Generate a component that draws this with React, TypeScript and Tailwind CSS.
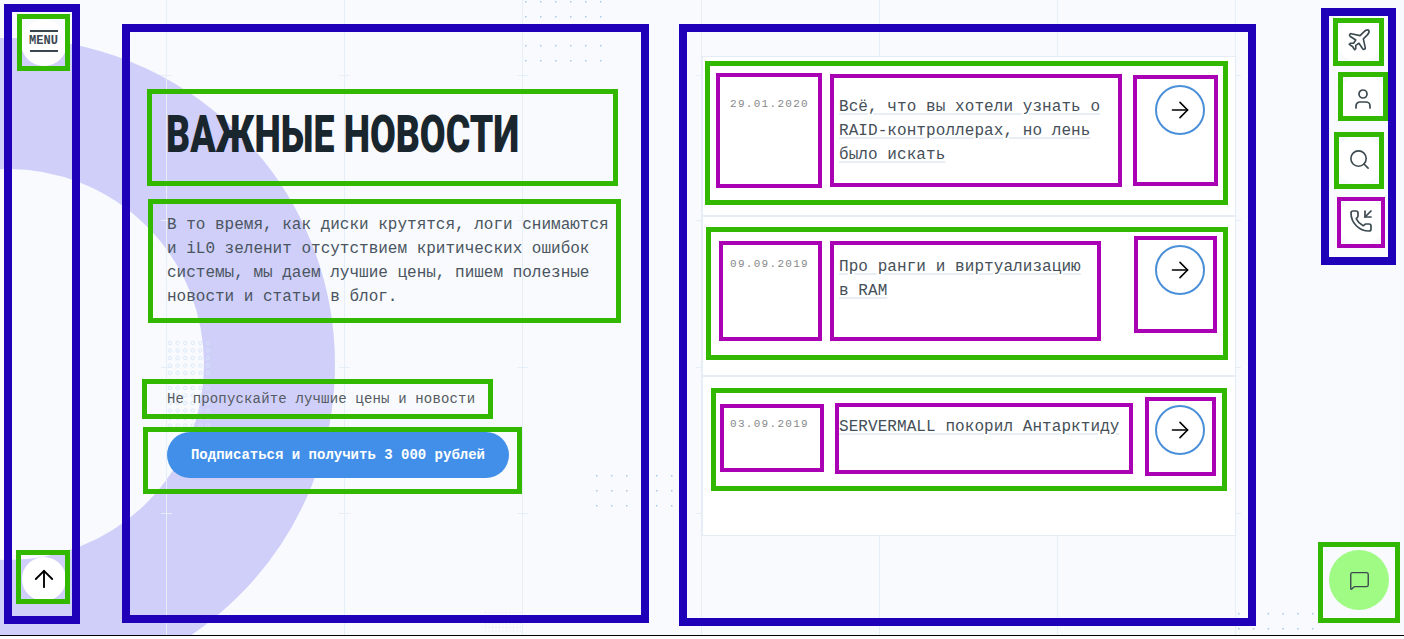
import { ArrowRight, ArrowUp, MessageSquare, PhoneIncoming, Plane, Search, User } from "lucide-react";

const mono = "font-['Liberation_Mono',monospace]";

function Decor() {
  const xs = [166, 344, 522, 701, 879, 1057, 1235];
  const ys = [75, 220, 367, 513];
  const dots: [number, number][] = [];
  for (const y of [1, 16, 45, 60]) for (let i = 0; i < 6; i++) dots.push([525 + i * 15, y]);
  for (const y of [475, 490, 505]) for (let i = 0; i < 6; i++) dots.push([596 + i * 15, y]);
  for (const y of [613, 628]) for (let i = 0; i < 6; i++) dots.push([1238 + i * 14.8, y]);
  const rings: [number, number][] = [];
  for (let r = 0; r < 12; r++) for (let c = 0; c < 6; c++) rings.push([170 + c * 7.6, 343 + r * 7.5]);
  const fine: [number, number][] = [];
  for (let r = 0; r < 6; r++) for (let c = 0; c < 11; c++) fine.push([485 + c * 3.5, 612 + r * 3.7]);
  return (
    <svg className="absolute left-0 top-0" width="1404" height="635" fill="none">
      {xs.map((x) => (
        <line key={x} x1={x + 0.5} x2={x + 0.5} y1="0" y2="635" stroke="#e6eef8" />
      ))}
      {xs.map((x) =>
        ys.map((y) => (
          <path key={`${x}-${y}`} d={`M${x - 5} ${y + 0.5}H${x + 6}`} stroke="#e6eef8" />
        )),
      )}
      {dots.map(([x, y]) => (
        <rect key={`${x}:${y}`} x={x} y={y} width="1.5" height="1.5" fill="#a9c8e8" />
      ))}
      {rings.map(([x, y]) => (
        <circle key={`${x}:${y}`} cx={x} cy={y} r="1.7" stroke="#d6e4f6" strokeWidth="0.8" />
      ))}
      {fine.map(([x, y]) => (
        <rect key={`${x}:${y}`} x={x} y={y} width="1" height="1" fill="#dfe6f2" />
      ))}
    </svg>
  );
}

function Circle({ children, className }: { children: React.ReactNode; className: string }) {
  return <div className={`flex shrink-0 items-center justify-center rounded-full ${className}`}>{children}</div>;
}

type RowProps = {
  date: string;
  title: React.ReactNode;
  rowClass: string;
  greenClass: string;
  dateClass: string;
  titleClass: string;
  arrowClass: string;
};

function Row({ date, title, rowClass, greenClass, dateClass, titleClass, arrowClass }: RowProps) {
  return (
    <div className={rowClass}>
      <div className={`flex items-start border-[5px] border-[#33b800] ${greenClass}`}>
        <div className={`shrink-0 border-4 border-[#a900b4] text-[11px] leading-4 tracking-[1.3px] text-[#85888c] ${mono} ${dateClass}`}>
          {date}
        </div>
        <div className={`shrink-0 border-4 border-[#a900b4] text-base leading-6 tracking-[0.07px] text-[#454f58] ${mono} ${titleClass}`}>
          <span className="underline decoration-[#e8eef6] decoration-2 underline-offset-2">{title}</span>
        </div>
        <div className={`shrink-0 border-4 border-[#a900b4] ${arrowClass}`}>
          <Circle className="h-[50px] w-[50px] border-2 border-[#4a90d9] bg-white">
            <ArrowRight size={26} strokeWidth={1.5} className="text-black" />
          </Circle>
        </div>
      </div>
    </div>
  );
}

export default function App() {
  return (
    <div className="relative h-[639px] w-full overflow-hidden bg-white">
      <div className="relative h-[636px] overflow-hidden border-b border-black bg-[#f8fafe]">
        <div className="absolute left-[-318px] top-[38px] h-[653px] w-[653px] rounded-full border-[131px] border-[#cfcffa]" />
        <Decor />
        <div className="relative flex items-start">
          {/* left rail */}
          <div className="ml-1 mt-1 flex h-[620px] w-[76px] shrink-0 flex-col border-8 border-[#1f00b8]">
            <div className="ml-[5px] mt-[2px] flex h-[57px] w-[53px] items-center justify-center overflow-hidden border-[5px] border-[#33b800]">
              <Circle className="h-[46px] w-[46px] flex-col bg-white pb-1">
                <div className="h-[2px] w-[28px] bg-[#3a474f]" />
                <div className={`my-[2px] text-xs font-bold leading-[14px] text-[#3a474f] ${mono}`}>MENU</div>
                <div className="h-[2px] w-[28px] bg-[#3a474f]" />
              </Circle>
            </div>
            <div className="ml-1 mt-[479px] flex h-[54px] w-[54px] items-center justify-center overflow-hidden border-[5px] border-[#33b800] pl-[2px] pt-1">
              <Circle className="h-[44px] w-[44px] bg-white">
                <ArrowUp size={28} strokeWidth={1.6} className="text-black" />
              </Circle>
            </div>
          </div>

          {/* intro panel */}
          <div className="ml-[42px] mt-6 h-[599px] w-[527px] shrink-0 border-8 border-[#1f00b8]">
            <div className="ml-[17px] mt-[57px] flex h-[97px] w-[471px] items-center border-[5px] border-[#33b800] pb-[7px] pl-[14px]">
              <h1 className="origin-left scale-x-[0.733] whitespace-nowrap font-['Roboto',sans-serif] text-[51px] font-black leading-none text-[#1a262e]">
                ВАЖНЫЕ НОВОСТИ
              </h1>
            </div>
            <div className={`ml-[18px] mt-[13px] h-[124px] w-[473px] border-[5px] border-[#33b800] pl-[14px] pt-[9px] text-base leading-6 text-[#4a5560] ${mono}`}>
              В то время, как диски крутятся, логи снимаются
              <br />
              и iL0 зеленит отсутствием критических ошибок
              <br />
              системы, мы даем лучшие цены, пишем полезные
              <br />
              новости и статьи в блог.
            </div>
            <div className={`ml-3 mt-14 flex h-10 w-[351px] items-center border-[5px] border-[#33b800] pl-5 text-sm tracking-[0.16px] text-[#555b61] ${mono}`}>
              Не пропускайте лучшие цены и новости
            </div>
            <div className="ml-[13px] mt-2 h-[67px] w-[379px] border-[5px] border-[#33b800] pl-[19px]">
              <button className={`h-[46px] w-[342px] rounded-full bg-[#418fe8] text-sm font-bold text-white ${mono}`}>
                Подписаться и получить 3 000 рублей
              </button>
            </div>
          </div>

          {/* news panel */}
          <div className="ml-[30px] mt-6 h-[602px] w-[577px] shrink-0 border-8 border-[#1f00b8] pl-[15px] pt-6">
            <div className="h-[480px] w-[534px] border border-[#e6ecf5] bg-white">
              <Row
                date="29.01.2020"
                title={<>Всё, что вы хотели узнать о<br />RAID-контроллерах, но лень<br />было искать</>}
                rowClass="h-[160px] border-b-2 border-[#e9eef6] pl-[2px] pt-1"
                greenClass="h-[144px] w-[523px]"
                dateClass="ml-[6px] mt-[7px] h-[115px] w-[106px] pl-[10px] pt-[19px]"
                titleClass="ml-2 mt-2 h-[113px] w-[292px] pl-[5px] pt-[17px]"
                arrowClass="ml-[11px] mt-[9px] h-[111px] w-[85px] pl-[18px] pt-[6px]"
              />
              <Row
                date="09.09.2019"
                title={<>Про ранги и виртуализацию<br />в RAM</>}
                rowClass="h-[160px] border-b-2 border-[#e9eef6] pl-[3px] pt-[10px]"
                greenClass="h-[133px] w-[522px]"
                dateClass="ml-2 mt-[9px] h-[100px] w-[103px] pl-[7px] pt-[11px]"
                titleClass="ml-2 mt-[9px] h-[100px] w-[271px] pl-[5px] pt-[10px]"
                arrowClass="ml-[33px] mt-1 h-[97px] w-[83px] pl-[17px] pt-[5px]"
              />
              <Row
                date="03.09.2019"
                title="SERVERMALL покорил Антарктиду"
                rowClass="h-[158px] pl-[8px] pt-[11px]"
                greenClass="h-[103px] w-[516px]"
                dateClass="ml-1 mt-[11px] h-[68px] w-[104px] pl-[6px] pt-2"
                titleClass="ml-[11px] mt-[10px] h-[71px] w-[298px] pt-2"
                arrowClass="ml-3 mt-1 h-[79px] w-[71px] pl-[6px] pt-1"
              />
            </div>
          </div>

          {/* right rail */}
          <div className="ml-[62px] mt-2 w-[82px] shrink-0">
            <div className="ml-[3px] h-[257px] w-[75px] border-8 border-[#1f00b8]">
              <div className="ml-1 mt-[2px] flex h-[48px] w-[51px] items-center justify-center overflow-hidden border-[5px] border-[#33b800] pb-1">
                <Circle className="h-[44px] w-[44px] bg-white">
                  <Plane size={26} strokeWidth={1.5} className="text-[#3c4a50]" />
                </Circle>
              </div>
              <div className="ml-[9px] mt-[6px] flex h-[49px] w-[50px] items-center justify-center overflow-hidden border-[5px] border-[#33b800] pt-[5px]">
                <Circle className="h-[48px] w-[48px] bg-white">
                  <User size={24} strokeWidth={1.7} className="text-[#3c4a50]" />
                </Circle>
              </div>
              <div className="ml-[5px] mt-[11px] flex h-[57px] w-[50px] items-center justify-center overflow-hidden border-[5px] border-[#33b800] pb-[2px]">
                <Circle className="h-[48px] w-[48px] bg-white">
                  <Search size={23} strokeWidth={1.7} className="text-[#3c4a50]" />
                </Circle>
              </div>
              <div className="ml-2 mt-2 flex h-[51px] w-[48px] items-center justify-center overflow-hidden border-4 border-[#a900b4] pb-1">
                <Circle className="h-[48px] w-[48px] bg-white">
                  <PhoneIncoming size={24} strokeWidth={1.7} className="text-[#3c4a50]" />
                </Circle>
              </div>
            </div>
            <div className="mt-[277px] flex h-[81px] w-[82px] justify-center border-[5px] border-[#33b800] pt-[3px]">
              <Circle className="h-[60px] w-[60px] bg-[#a0fb85]">
                <MessageSquare size={21} strokeWidth={1.6} className="text-[#3c4a50]" />
              </Circle>
            </div>
          </div>
        </div>
      </div>
    </div>
  );
}
